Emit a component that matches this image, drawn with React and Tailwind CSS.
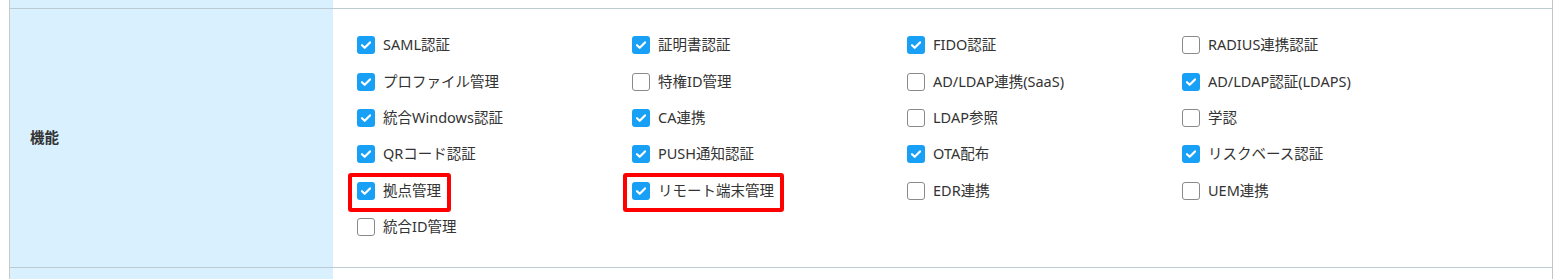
import React from 'react';

const features = [
  { label: 'SAML認証', checked: true },
  { label: '証明書認証', checked: true },
  { label: 'FIDO認証', checked: true },
  { label: 'RADIUS連携認証', checked: false },
  { label: 'プロファイル管理', checked: true },
  { label: '特権ID管理', checked: false },
  { label: 'AD/LDAP連携(SaaS)', checked: false },
  { label: 'AD/LDAP認証(LDAPS)', checked: true },
  { label: '統合Windows認証', checked: true },
  { label: 'CA連携', checked: true },
  { label: 'LDAP参照', checked: false },
  { label: '学認', checked: false },
  { label: 'QRコード認証', checked: true },
  { label: 'PUSH通知認証', checked: true },
  { label: 'OTA配布', checked: true },
  { label: 'リスクベース認証', checked: true },
  { label: '拠点管理', checked: true, marked: true },
  { label: 'リモート端末管理', checked: true, marked: true },
  { label: 'EDR連携', checked: false },
  { label: 'UEM連携', checked: false },
  { label: '統合ID管理', checked: false },
];

// checkbox drawn by hand so it looks the same as the screenshot
const Box = ({ checked }) =>
  checked ? (
    <span className="flex h-[18px] w-[18px] shrink-0 items-center justify-center rounded-[3px] bg-[#17a0f5]">
      <svg width="12" height="12" viewBox="0 0 12 12" fill="none">
        <path d="M2 6.2l2.7 2.6L10 3.4" stroke="#fff" strokeWidth="2.2" strokeLinecap="round" strokeLinejoin="round" />
      </svg>
    </span>
  ) : (
    <span className="h-[18px] w-[18px] shrink-0 rounded-[3px] border border-[#8a8a8a] bg-white" />
  );

const Feature = ({ label, checked, marked }) => (
  <div className="flex h-[36.4px] items-center">
    <label className="relative flex h-5 items-center gap-2">
      <Box checked={checked} />
      <span>{label}</span>
      {marked && (
        <span className="pointer-events-none absolute -top-[8px] -bottom-[11px] -left-[9px] -right-[10px] rounded-[3px] border-4 border-[#ff0000]" />
      )}
    </label>
  </div>
);

export default function App() {
  return (
    <div
      className="bg-white text-[14.5px] text-[#333]"
      style={{ fontFamily: '"Noto Sans", "Noto Sans CJK JP", sans-serif' }}
    >
      <div className="ml-[9px] w-[1544px] border-x border-l-[#c9c9c9] border-r-[#c4c4c4]">
        {/* tail of the previous row */}
        <div className="flex h-[9px] border-b border-[#bccbd2]">
          <div className="w-[323px] bg-[#d9f0fe]" />
          <div className="flex-1" />
        </div>

        <div className="flex border-b border-[#bccbd2]">
          <div className="flex w-[323px] items-center bg-[#d9f0fe] pl-5 font-bold">機能</div>
          <div className="flex-1 pl-6 pt-[18px] pb-[22px]">
            <div className="grid grid-cols-[275px_275px_275px_275px]">
              {features.map((f) => (
                <Feature key={f.label} {...f} />
              ))}
            </div>
          </div>
        </div>

        {/* head of the next row */}
        <div className="flex h-[11px]">
          <div className="w-[323px] bg-[#d9f0fe]" />
          <div className="flex-1" />
        </div>
      </div>
    </div>
  );
}
